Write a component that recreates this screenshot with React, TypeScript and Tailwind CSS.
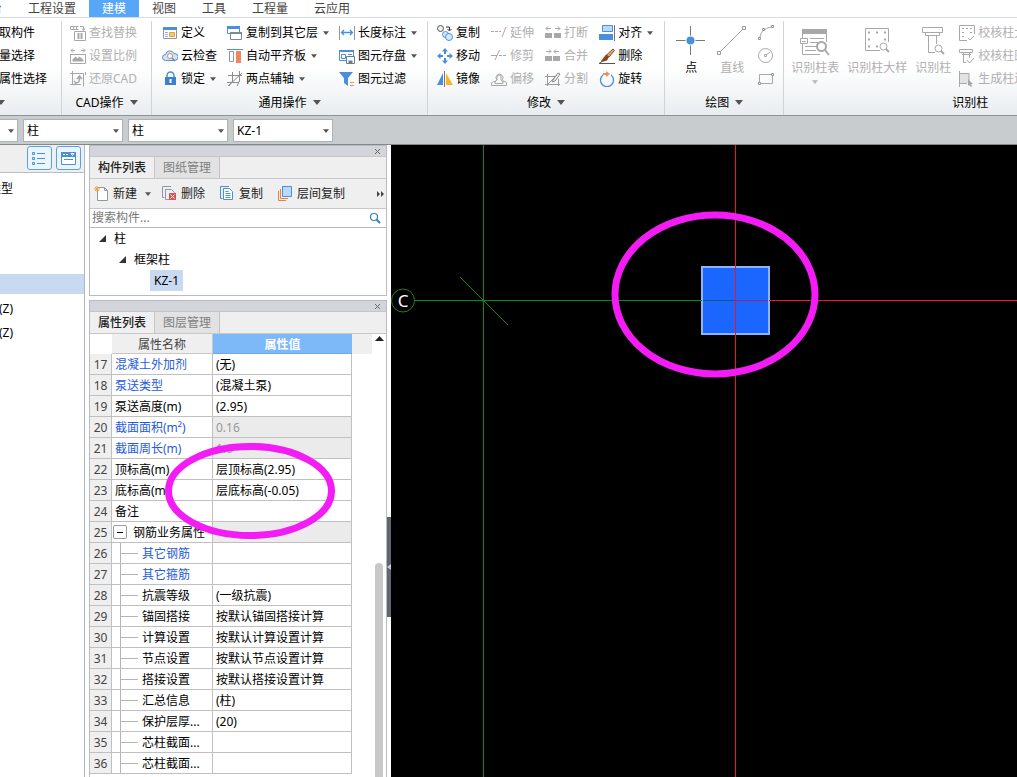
import type { ReactNode } from "react";

const G = "#a8a8a8";
const B = "#4a8fdc";

function Caret({ off = false, big = false }: { off?: boolean; big?: boolean }) {
  return (
    <svg width={big ? 8 : 6} height={big ? 5 : 4} viewBox="0 0 8 5" className="shrink-0">
      <path d="M0 0h8L4 5z" fill={off ? "#b5b5b5" : "#555"} />
    </svg>
  );
}

function Icon({ size = 16, children }: { size?: number; children: ReactNode }) {
  return (
    <svg width={size} height={size} viewBox={`0 0 ${size} ${size}`} fill="none" className="shrink-0">
      {children}
    </svg>
  );
}

const icons = {
  find: (
    <Icon>
      <path d="M.5 1.5h8M.5 4.5h8M.5 1v3M3.5 1v3M6.5 1v3M10 1.5h3.5V5M12 3.5l1.5 2 1.5-2" stroke={G} />
      <path d="M4.5 6.5h11v9h-11zM7 9h6M7 11h6M7 13h6M8.5 8v6M11.5 8v6" stroke={G} />
    </Icon>
  ),
  scale: (
    <Icon>
      <path d="M1 2.5h4M3 .5l-2 2 2 2M11 2.5h4M13 .5l2 2-2 2M.5 6v9.500h15V6M.5 6.5h15" stroke={G} />
      <path d="M2.5 13.5v-2l3-3 2 2 2-2 4 3.500v1.500z" fill={G} />
    </Icon>
  ),
  restore: (
    <Icon>
      <path d="M2.5 0v13.500M0 2.5h13.500v13M0 13.5h11M15.5 1v3" stroke={G} />
      <path d="M5.5 12c4 0 4-2 4-6M7 8l2.500-3L12 8M4 10l2 2-2 2" stroke={G} strokeWidth="1.5" />
    </Icon>
  ),
  define: (
    <Icon>
      <path d="M1.5 2.5h13v11h-13z" fill="#fff" stroke="#8a98a8" />
      <path d="M1 2h14v3H1z" fill={B} />
      <path d="M3 7.5h3M3 9.5h3M3 11.5h3" stroke="#8fb4dd" />
      <path d="M7.5 7.5h5v4h-5z" fill="#f8c878" stroke="#e8a23c" />
    </Icon>
  ),
  cloud: (
    <Icon>
      <path d="M3.5 12.5a3 3 0 0 1 0-6 4.500 4.500 0 0 1 8.500-1 3.500 3.500 0 0 1 1 7z" fill="#cfe2f7" stroke="#5b92cf" />
      <circle cx="8" cy="8" r="2.5" fill="#fff" stroke="#d8826a" />
      <path d="M10 10l3 3" stroke="#5b92cf" strokeWidth="1.5" />
    </Icon>
  ),
  lock: (
    <Icon>
      <path d="M5 7V4.500a3.500 3.500 0 0 1 7 0V7" stroke={B} strokeWidth="1.5" />
      <path d="M3 6h11v8H3z" fill="#3b7fd0" />
      <path d="M8.5 8v4" stroke="#fff" strokeWidth="2" />
    </Icon>
  ),
  floors: (
    <Icon>
      <path d="M.5 1.5h12v7H.5z" fill="#fff" stroke={B} />
      <path d="M0 1h13v3H0z" fill={B} />
      <path d="M3.5 7.5h11v7h-11z" fill="#fff" stroke="#7c8a96" />
      <path d="M3 7h12v2H3z" fill="#7c8a96" />
    </Icon>
  ),
  slab: (
    <Icon>
      <path d="M0 1.5h16" stroke={B} />
      <path d="M2.5 3.5h4v10h-4z" stroke="#8a98a8" />
      <path d="M9 3h5v12H9z" fill="#f0855e" />
    </Icon>
  ),
  axis: (
    <Icon>
      <path d="M1 4.5h14M0 11.5h12M5.5 1v9L2 15M12.5 0v10L10 15M1 15L15 2" stroke="#8c8c8c" />
    </Icon>
  ),
  dim: (
    <Icon>
      <path d="M.5 1v14M15.5 1v14" stroke="#8a98a8" />
      <path d="M2.5 7.5h11M5 5L2.5 7.5 5 10M11 5l2.500 2.500L11 10" stroke={B} strokeWidth="1.3" />
    </Icon>
  ),
  store: (
    <Icon>
      <path d="M.5 2.5h14v10H.5z" fill="#fff" stroke={B} />
      <path d="M0 2h15v2H0z" fill={B} />
      <path d="M2.5 6.5h4v4h-4zM9 6.5h4" stroke={B} />
      <path d="M7.5 8.5h8v7h-8z" fill="#fff" stroke="#6d7c8a" />
      <path d="M9.5 12.5h4v3h-4z" fill="#6d7c8a" />
    </Icon>
  ),
  filter: (
    <Icon>
      <path d="M0 1h14L9 7v8l-4-3V7z" fill={B} />
      <path d="M11 11.5h4M11 14.5h4" stroke="#e8935c" />
    </Icon>
  ),
  copy: (
    <Icon>
      <circle cx="3.5" cy="3.5" r="3" fill="#eee" stroke="#555" />
      <path d="M9 2h3.500v3M10.5 4l2 2 2-2" stroke="#333" />
      <circle cx="8.5" cy="9.5" r="3" fill="#d6e8fb" stroke={B} />
      <circle cx="12" cy="12" r="3.5" fill="#d6e8fb" stroke={B} />
    </Icon>
  ),
  move: (
    <Icon>
      <path
        d="M8 0l3 3.500H9V6H7V3.500H5zM8 16l-3-3.500h2V10h2v2.500h2zM0 8l3.500-3v2H6v2H3.500v2zM16 8l-3.500 3V9H10V7h2.500V5z"
        fill={B}
      />
    </Icon>
  ),
  mirror: (
    <Icon>
      <path d="M6 2v12H0z" fill={B} />
      <path d="M9 2v12h7z" fill="#f5b52e" />
      <path d="M7.5 0v16" stroke="#777" />
    </Icon>
  ),
  extend: (
    <Icon>
      <path d="M0 6.5h10" stroke={G} strokeDasharray="3 1" />
      <path d="M15 2l-4 10" stroke={G} />
    </Icon>
  ),
  trim: (
    <Icon>
      <path d="M0 7.5h6" stroke={G} />
      <path d="M8 7.5h8" stroke={G} strokeDasharray="3 1" />
      <path d="M8.5 2L4 12" stroke={G} />
    </Icon>
  ),
  offset: (
    <Icon>
      <path d="M.5 14.5V12l2-1.500h2l1-2a3.500 3.500 0 1 1 6 0l1 2h2l1 1.500v2.500z" stroke={G} />
      <path d="M4 12.5h8V11l-2-2V6a2 2 0 0 0-4 0v3l-2 2z" stroke={G} />
    </Icon>
  ),
  breakIt: (
    <Icon>
      <path d="M0 8h7v5H0zM9 8h7v5H9z" fill={G} />
      <path d="M1 3.5h5M3 1.5l-2 2 2 2M10 3.5h5M13 1.5l2 2-2 2" stroke={G} />
    </Icon>
  ),
  join: (
    <Icon>
      <path d="M0 8h7v5H0zM8 8h7v5H8z" fill={G} />
      <path d="M1 3.5h5M4 1.5l2 2-2 2M9 3.5h5M11 1.5l-2 2 2 2" stroke={G} />
    </Icon>
  ),
  split: (
    <Icon>
      <path d="M2.5 3v12M0 5.5h11M0 13.5h15M13.5 8v7M3 13l9-9" stroke="#999" />
      <path d="M8 9l5-7 2 1-5 7-3 1z" stroke="#888" />
    </Icon>
  ),
  align: (
    <Icon>
      <path d="M3.5.5h10v6h-10z" fill="#b9d8fa" stroke={B} />
      <path d="M0 9h14v6H0z" fill={B} />
      <path d="M15.5 0v16" stroke="#777" />
    </Icon>
  ),
  erase: (
    <Icon>
      <path d="M14 1l1.500 1.500L10 9 7.500 7z" fill="#e0a070" stroke="#8a5030" />
      <path d="M7 6.5L10 9l-2 3.500L3 14l-1-1z" fill="#8a4520" />
      <path d="M0 15.5h16M0 15.5l3-2" stroke="#555" />
    </Icon>
  ),
  rotate: (
    <Icon>
      <path d="M4 4a6.500 6.500 0 1 0 8 0" stroke={B} strokeWidth="1.3" />
      <path d="M4 3h4" stroke="#e8935c" strokeWidth="2" />
      <path d="M7 0l4 3-4 3z" fill="#e8935c" />
    </Icon>
  ),
  arc: (
    <Icon>
      <path d="M2 12q1-8 11-10" stroke={G} />
      <path d="M.5 12.5h2v2h-2zM4.5 3.5h2v2h-2zM13.5.5h2v2h-2z" fill="#fff" stroke="#999" />
    </Icon>
  ),
  circle: (
    <Icon>
      <circle cx="7.5" cy="7.5" r="7" stroke={G} />
      <path d="M8 7l4-3M6.5 6.5h2v2h-2z" stroke={G} />
    </Icon>
  ),
  rect: (
    <Icon>
      <path d="M1.5 3.5h13v9h-13z" stroke={G} />
      <path d="M.5 11.5h2v2h-2zM13.5 2.5h2v2h-2z" fill="#fff" stroke="#999" />
    </Icon>
  ),
  checkDetail: (
    <Icon>
      <path d="M8 15.5H.5V.5h15V9" stroke={G} />
      <path d="M3 3.5h2M7 3.5h2M11 3.5h2M3 7.5h2M11 7.5h2M3 11.5h2" stroke={G} />
      <path d="M9 13l2 2 4-4" stroke={G} />
    </Icon>
  ),
  checkCol: (
    <Icon>
      <path d="M.5 1.5h13v3H.5zM4.5 4.5v10h3M10.5 5v5M3 6.5h9" stroke={G} />
      <path d="M8 12l2.500 3 4.500-5" stroke={G} />
    </Icon>
  ),
  makeEdge: (
    <Icon>
      <path d="M1 2h9v10H1z" fill="#e3e3e3" />
      <path d="M.5 0v16M0 2.5h10V10M0 12.5h8" stroke={G} />
      <path d="M9 8l5 5h-2l1 2-1 1-2-2-1 1z" fill={G} />
    </Icon>
  ),
};

type ToolProps = { icon?: ReactNode; label?: string; caret?: boolean; off?: boolean };

function Tool({ icon, label, caret, off }: ToolProps) {
  return (
    <button
      type="button"
      disabled={off}
      className={`flex h-[23px] items-center gap-[3px] whitespace-nowrap ${off ? "text-[#b0b0b0]" : "text-black"}`}
    >
      {icon}
      {label && <span>{label}</span>}
      {caret && (
        <span className="ml-0.5 flex">
          <Caret />
        </span>
      )}
    </button>
  );
}

function BigTool({ icon, label, caret, off }: ToolProps) {
  return (
    <button
      type="button"
      disabled={off}
      className={`flex flex-col items-center self-start pt-[5px] whitespace-nowrap ${off ? "text-[#b0b0b0]" : "text-black"}`}
    >
      {icon}
      <span className="leading-6">{label}</span>
      {caret && <Caret off />}
    </button>
  );
}

type GroupProps = { title: string; pad: string; gap?: string; last?: boolean; children: ReactNode };

function RibbonGroup({ title, pad, gap = "", last = false, children }: GroupProps) {
  return (
    <section className={`flex shrink-0 flex-col ${last ? "w-[372px]" : "border-r border-[#d0d4d8]"}`}>
      <div className={`flex h-[69px] ${pad} ${gap}`}>{children}</div>
      <h2 className="flex h-[25px] items-center justify-center gap-[6px] whitespace-nowrap text-black">
        {title}
        {!last && <Caret big />}
      </h2>
    </section>
  );
}

const menus = ["工程设置", "建模", "视图", "工具", "工程量", "云应用"];

function MenuBar() {
  return (
    <nav className="flex h-[18px] shrink-0 border-b border-[#d5dce2] bg-white leading-[17px] text-[#444]">
      <button type="button" className="flex w-[15px] justify-end overflow-hidden pr-[13px]">
        台
      </button>
      {menus.map((m) => (
        <button
          type="button"
          key={m}
          className={`px-[13px] ${m === "建模" ? "bg-[#57a6f7] text-white" : ""}`}
        >
          {m}
        </button>
      ))}
    </nav>
  );
}

function Ribbon() {
  return (
    <div className="flex shrink-0 overflow-hidden border-b border-[#8f9396] bg-gradient-to-b from-white from-50% to-[#e9edef] pt-[3px]">
      {/* scrolled left, only the tail of the first group shows */}
      <div className="-ml-[89px] flex shrink-0">
        <RibbonGroup title="选择" pad="pl-[76px] pr-[14px]">
          <div>
            <Tool label="拾取构件" />
            <Tool label="批量选择" />
            <Tool label="按属性选择" />
          </div>
        </RibbonGroup>
      </div>
      <RibbonGroup title="CAD操作" pad="pl-2 pr-[14px]">
        <div>
          <Tool icon={icons.find} label="查找替换" off />
          <Tool icon={icons.scale} label="设置比例" off />
          <Tool icon={icons.restore} label="还原CAD" off />
        </div>
      </RibbonGroup>
      <RibbonGroup title="通用操作" pad="pl-[10px] pr-[10px]" gap="gap-[10px]">
        <div>
          <Tool icon={icons.define} label="定义" />
          <Tool icon={icons.cloud} label="云检查" />
          <Tool icon={icons.lock} label="锁定" caret />
        </div>
        <div>
          <Tool icon={icons.floors} label="复制到其它层" caret />
          <Tool icon={icons.slab} label="自动平齐板" caret />
          <Tool icon={icons.axis} label="两点辅轴" caret />
        </div>
        <div>
          <Tool icon={icons.dim} label="长度标注" caret />
          <Tool icon={icons.store} label="图元存盘" caret />
          <Tool icon={icons.filter} label="图元过滤" />
        </div>
      </RibbonGroup>
      <RibbonGroup title="修改" pad="pl-[9px] pr-[11px]" gap="gap-[11px]">
        <div>
          <Tool icon={icons.copy} label="复制" />
          <Tool icon={icons.move} label="移动" />
          <Tool icon={icons.mirror} label="镜像" />
        </div>
        <div>
          <Tool icon={icons.extend} label="延伸" off />
          <Tool icon={icons.trim} label="修剪" off />
          <Tool icon={icons.offset} label="偏移" off />
        </div>
        <div>
          <Tool icon={icons.breakIt} label="打断" off />
          <Tool icon={icons.join} label="合并" off />
          <Tool icon={icons.split} label="分割" off />
        </div>
        <div>
          <Tool icon={icons.align} label="对齐" caret />
          <Tool icon={icons.erase} label="删除" />
          <Tool icon={icons.rotate} label="旋转" />
        </div>
      </RibbonGroup>
      <RibbonGroup title="绘图" pad="pl-[11px] pr-[9px]" gap="gap-[11px]">
        <BigTool
          label="点"
          icon={
            <Icon size={30}>
              <path d="M14.5 0v29M0 14.5h29" stroke="#777" />
              <circle cx="14.5" cy="14.5" r="5" fill="#fff" />
              <circle cx="14.5" cy="14.5" r="4" fill={B} />
            </Icon>
          }
        />
        <BigTool
          off
          label="直线"
          icon={
            <Icon size={30}>
              <path d="M3 26L27 2" stroke={G} />
              <path d="M.5 25.5h3v3h-3zM25.5.5h3v3h-3z" fill="#fff" stroke="#999" />
            </Icon>
          }
        />
        <div>
          <Tool icon={icons.arc} off />
          <Tool icon={icons.circle} off />
          <Tool icon={icons.rect} off />
        </div>
      </RibbonGroup>
      <RibbonGroup title="识别柱" pad="pl-[7px]" gap="gap-2" last>
        <BigTool
          off
          caret
          label="识别柱表"
          icon={
            <Icon size={30}>
              <path d="M2 3h25v5H2z" fill={G} />
              <path
                d="M2.5 8v4M2.500 18v10.500H20M26.5 8v8M.5 12.5h7v5h-7zM2 15.500h4M10 12.500h14M10 16.500h8M5 20.5h11M5 24.5h11"
                stroke={G}
              />
              <circle cx="21.5" cy="20.5" r="4.5" fill="#fff" stroke={G} strokeWidth="2" />
              <path d="M25 24l4 5" stroke={G} strokeWidth="2" />
            </Icon>
          }
        />
        <BigTool
          off
          label="识别柱大样"
          icon={
            <Icon size={30}>
              <path d="M26.5 16V2.500h-23v22H18" stroke={G} />
              <path d="M6 6.5h2M14 6.5h2M22 6.5h2M6 13.5h2M22 13.5h2M6 20.5h2M14 20.5h2" stroke={G} strokeWidth="2" />
              <circle cx="21.5" cy="20.5" r="3.5" stroke={G} />
              <path d="M24 23l3 3" stroke={G} strokeWidth="2" />
            </Icon>
          }
        />
        <BigTool
          off
          label="识别柱"
          icon={
            <Icon size={30}>
              <path d="M4.5 1.5h20v5h-20zM7.5 6.5v3h14v-3M10.5 9.5v17H17M18.5 9.5V18" stroke={G} />
              <circle cx="20.5" cy="22.5" r="3.5" stroke={G} />
              <path d="M23 25l3 3" stroke={G} strokeWidth="2" />
            </Icon>
          }
        />
        <div>
          <Tool icon={icons.checkDetail} label="校核柱大样" off />
          <Tool icon={icons.checkCol} label="校核柱图元" off />
          <Tool icon={icons.makeEdge} label="生成柱边线" off />
        </div>
      </RibbonGroup>
    </div>
  );
}

function Combo({ name, value }: { name: string; value: string }) {
  return (
    <div className="relative w-[100px] shrink-0">
      <select
        aria-label={name}
        defaultValue={value}
        className="h-[23px] w-full appearance-none border border-[#aeb2b6] bg-white pl-[3px] text-[12px] text-black"
      >
        <option>{value}</option>
      </select>
      <span className="pointer-events-none absolute inset-y-0 right-1 flex items-center">
        <Caret />
      </span>
    </div>
  );
}

function FilterBar() {
  return (
    <div className="flex h-[29px] shrink-0 items-start gap-[5px] overflow-hidden border-b border-[#85888b] bg-[#c9cccf] pt-[3px]">
      <div className="-ml-[82px] shrink-0">
        <Combo name="楼层" value="首层" />
      </div>
      <Combo name="构件大类" value="柱" />
      <Combo name="构件类型" value="柱" />
      <Combo name="构件" value="KZ-1" />
    </div>
  );
}

const navRows = ["常用类型", "", "", "", "", "构造柱(Z)", "砌体柱(Z)"];

function NavPanel() {
  const btn = "flex h-6 w-[25px] items-center justify-center rounded-[3px] border border-[#5aa0e6] bg-[#eaf5ff]";
  return (
    <aside className="w-[85px] shrink-0 border-r border-[#b4b8be] bg-white">
      <div className="flex h-7 justify-end gap-1 border-b border-[#b9bdc2] bg-[#efefef] pt-px pr-[3px]">
        <button type="button" aria-label="列表" className={btn}>
          <Icon size={15}>
            <path d="M.5 1.5h2v2h-2zM.5 6.5h2v2h-2zM.5 11.5h2v2h-2z" stroke={B} />
            <path d="M5 2.5h8M5 7.5h8M5 12.5h8" stroke={B} />
          </Icon>
        </button>
        <button type="button" aria-label="窗口" className={btn}>
          <Icon size={15}>
            <path d="M.5 1.5h14v12H.5z" fill="#fff" stroke={B} />
            <path d="M0 1h15v5H0z" fill={B} />
            <path d="M2 3.5h2M5 3.5h2M10 2.5h3l-1.500 2z" stroke="#fff" />
            <path d="M3 8.5h9" stroke={B} />
          </Icon>
        </button>
      </div>
      <ul className="pt-[3px]">
        {navRows.map((r, i) => (
          <li key={i} className="flex h-6 items-center">
            <div className={`h-5 w-full ${i === 4 ? "bg-[#c9d9ef]" : ""}`}>
              <span className="flex w-[13px] justify-end leading-[22px] whitespace-nowrap text-black">{r}</span>
            </div>
          </li>
        ))}
      </ul>
    </aside>
  );
}

function PanelHead({ tabs }: { tabs: string[] }) {
  return (
    <>
      <div className="flex h-[11px] items-center justify-end border-b border-[#c3c5cb] bg-[#d4d5db] pr-[5px]">
        <button type="button" aria-label="关闭">
          <svg width="7" height="7" viewBox="0 0 7 7" className="block">
            <path d="M1 1l5 5M6 1L1 6" stroke="#666" />
          </svg>
        </button>
      </div>
      <div className="flex h-[22px] border-b border-[#c6c8cc] bg-[#efefef]">
        <button type="button" className="border-r border-[#c6c8cc] px-2 font-medium text-[#222]">
          {tabs[0]}
        </button>
        <button type="button" className="border-r border-[#c0c2c6] bg-[#e2e2e2] px-2 text-[#808080]">
          {tabs[1]}
        </button>
      </div>
    </>
  );
}

function TreeMark() {
  return (
    <svg width="7" height="7" viewBox="0 0 7 7">
      <path d="M7 0v7H0z" fill="#333" />
    </svg>
  );
}

function ComponentPanel() {
  const tool = "flex items-center gap-[3px] whitespace-nowrap text-[#222]";
  return (
    <section className="border border-[#b8bbc2] bg-white">
      <PanelHead tabs={["构件列表", "图纸管理"]} />
      <div className="flex h-[30px] items-center gap-[15px] border-b border-[#c6c8cc] bg-[#efefef] pr-px pl-1">
        <div className="flex items-center gap-2">
          <button type="button" className={tool}>
            <Icon>
              <path d="M3.5 1.5h7l3 3v10h-10z" fill="#fff" stroke="#8a98a8" />
              <path d="M10.5 1.5v3h3" stroke="#8a98a8" />
              <path d="M3 0v6M0 3h6M1 1l4 4M5 1L1 5" stroke="#f0a040" />
            </Icon>
            新建
          </button>
          <Caret />
        </div>
        <button type="button" className={`-ml-1 ${tool}`}>
          <Icon>
            <path d="M9 .5H.5v11h2M3.5 3.5h6l3 3v3M3.5 3.5v10H7" stroke="#8a98a8" />
            <path d="M7 7h7v7H7z" fill="#d9525a" />
            <path d="M8.5 8.5l4 4M12.5 8.5l-4 4" stroke="#fff" />
          </Icon>
          删除
        </button>
        <button type="button" className={tool}>
          <Icon>
            <path d="M9 .5H.5v12h2" stroke={B} />
            <path d="M3.5 2.5h6l3 3v8h-9z" fill="#fff" stroke={B} />
            <path d="M5.5 5.5h3M5.5 7.5h5M5.5 9.5h5M5.5 11.5h5" stroke={B} />
          </Icon>
          复制
        </button>
        <button type="button" className={tool}>
          <Icon>
            <path d="M4.5.5h9v10h-9z" fill="#b9d8fa" stroke={B} />
            <path d="M2.5 3v9.500H10M.5 5v9.500H8" stroke="#e8833c" />
          </Icon>
          层间复制
        </button>
        <button type="button" aria-label="更多" className="ml-auto">
          <svg width="8" height="6" viewBox="0 0 8 6">
            <path d="M0 0v6l3-3zM4 0v6l3-3z" fill="#444" />
          </svg>
        </button>
      </div>
      <div className="flex h-[19px] items-center border-b border-[#b8bbc2] pr-[5px] pl-0.5">
        <input
          type="text"
          aria-label="搜索构件"
          placeholder="搜索构件..."
          className="min-w-0 flex-1 leading-4 outline-none placeholder:text-[#777]"
        />
        <svg width="12" height="12" viewBox="0 0 12 12" fill="none">
          <circle cx="5" cy="5" r="3.5" stroke="#2f83b5" strokeWidth="1.2" />
          <path d="M7.5 7.5l3.500 3.500" stroke="#2f83b5" strokeWidth="2" />
        </svg>
      </div>
      <ul className="h-[67px] leading-[21px] text-black">
        <li className="flex items-center gap-2 pl-[9px]">
          <TreeMark />柱
        </li>
        <li className="flex items-center gap-2 pl-[29px]">
          <TreeMark />
          框架柱
        </li>
        <li className="pl-[60px]">
          <span className="inline-block bg-[#c9d9ef] px-1">KZ-1</span>
        </li>
      </ul>
    </section>
  );
}

type Row = { n: number; name: string; value?: string; blue?: boolean; grey?: boolean; child?: boolean; parent?: boolean };

const rows: Row[] = [
  { n: 17, name: "混凝土外加剂", value: "(无)", blue: true },
  { n: 18, name: "泵送类型", value: "(混凝土泵)", blue: true },
  { n: 19, name: "泵送高度(m)", value: "(2.95)" },
  { n: 20, name: "截面面积(m²)", value: "0.16", blue: true, grey: true },
  { n: 21, name: "截面周长(m)", value: "1.6", blue: true, grey: true },
  { n: 22, name: "顶标高(m)", value: "层顶标高(2.95)" },
  { n: 23, name: "底标高(m)", value: "层底标高(-0.05)" },
  { n: 24, name: "备注" },
  { n: 25, name: "钢筋业务属性", grey: true, parent: true },
  { n: 26, name: "其它钢筋", blue: true, child: true },
  { n: 27, name: "其它箍筋", blue: true, child: true },
  { n: 28, name: "抗震等级", value: "(一级抗震)", child: true },
  { n: 29, name: "锚固搭接", value: "按默认锚固搭接计算", child: true },
  { n: 30, name: "计算设置", value: "按默认计算设置计算", child: true },
  { n: 31, name: "节点设置", value: "按默认节点设置计算", child: true },
  { n: 32, name: "搭接设置", value: "按默认搭接设置计算", child: true },
  { n: 33, name: "汇总信息", value: "(柱)", child: true },
  { n: 34, name: "保护层厚...", value: "(20)", child: true },
  { n: 35, name: "芯柱截面...", child: true },
  { n: 36, name: "芯柱截面...", child: true },
];

function NameCell({ row }: { row: Row }) {
  return (
    <div className={`flex h-5 items-center whitespace-nowrap ${row.child ? "pl-2" : row.parent ? "pl-px" : "pl-[3px]"}`}>
      {row.child && (
        <span className="mr-1 flex h-5 w-[18px] shrink-0 items-center border-l border-[#b4b4b4]">
          <span className="h-px w-full bg-[#b4b4b4]" />
        </span>
      )}
      {row.parent && (
        <button
          type="button"
          aria-label="折叠"
          className="mr-[6px] flex size-[14px] shrink-0 items-center justify-center rounded-[2px] border border-[#999] bg-white"
        >
          <span className="h-px w-[6px] bg-black" />
        </button>
      )}
      <span className="pt-0.5">{row.name}</span>
    </div>
  );
}

function PropertyPanel() {
  const cell = "border-r border-b border-[#c0c0c0] p-0";
  return (
    <section className="relative mt-1 flex min-h-0 flex-1 flex-col border border-b-0 border-[#b8bbc2] bg-white">
      <PanelHead tabs={["属性列表", "图层管理"]} />
      <div className="flex min-h-0 flex-1 overflow-hidden">
        <table className="w-[282px] shrink-0 table-fixed border-separate border-spacing-0 self-start text-left text-black">
          <colgroup>
            <col className="w-[22px]" />
            <col className="w-[101px]" />
            <col className="w-[139px]" />
            <col className="w-5" />
          </colgroup>
          <thead>
            <tr className="h-5 text-center">
              <td className="p-0" />
              <th className="border-r border-b border-[#c8c8c8] bg-[#efefef] p-0 pt-0.5 font-normal text-[#444]">属性名称</th>
              <th className="border-b border-[#6fa8e8] bg-[#7db8f8] p-0 pt-0.5 font-bold text-white">属性值</th>
              <td className="bg-[#efefef] p-0" />
            </tr>
          </thead>
          <tbody>
            {rows.map((r) => (
              <tr key={r.n} className="h-[21px]">
                <td className={`${cell} bg-[#efefef] pt-0.5 text-center text-[#444]`}>{r.n}</td>
                <td className={`${cell} ${r.blue ? "text-[#1f5ae0]" : ""}`}>
                  <NameCell row={r} />
                </td>
                <td className={`${cell} pt-0.5 pl-[3px] whitespace-nowrap ${r.grey ? "bg-[#ebebeb] text-[#999]" : ""}`}>
                  {r.value}
                </td>
              </tr>
            ))}
          </tbody>
        </table>
        <div className="flex flex-1 flex-col items-center justify-between pt-[2px]">
          <svg width="9" height="5" viewBox="0 0 9 5">
            <path d="M0 5h9L4.5 0z" fill="#222" />
          </svg>
          <div className="h-[214px] w-2 rounded-t-full bg-[#c8c8c8]" />
        </div>
      </div>
      <svg className="pointer-events-none absolute top-[141px] left-[74px]" width="172" height="98" viewBox="0 0 172 98">
        <ellipse cx="86" cy="49" rx="81.5" ry="44.5" fill="none" stroke="#f41cf4" strokeWidth="7" />
      </svg>
    </section>
  );
}

function ModelView() {
  return (
    <main className="min-w-0 flex-1 overflow-hidden bg-black">
      <svg width="100%" height="100%" className="block">
        {/* column section */}
        <rect x="311" y="122" width="67" height="67" fill="#1a66ff" stroke="#8fb4ff" strokeWidth="2" />
        {/* axes */}
        <rect x="92" y="0" width="1" height="100%" fill="#0a8a1a" />
        <rect x="23" y="155" width="288" height="1" fill="#0a8a1a" />
        <rect x="312" y="155" width="32" height="1" fill="#0b5a78" />
        <rect x="344" y="0" width="1" height="100%" fill="#f0142a" />
        <rect x="344" y="155" width="33" height="1" fill="#a02868" />
        <rect x="378" y="155" width="100%" height="1" fill="#f0142a" />
        <path d="M69 132l48 48" stroke="#1f8a24" />
        <circle cx="12" cy="155.5" r="11.5" fill="none" stroke="#1f7f26" />
        <text x="12" y="162" textAnchor="middle" fontSize="17" fill="#fff" className="font-['Noto_Sans']">
          C
        </text>
        <ellipse cx="324" cy="149.5" rx="100" ry="79.5" fill="none" stroke="#f41cf4" strokeWidth="7" />
      </svg>
    </main>
  );
}

export default function App() {
  return (
    <div className="flex h-screen flex-col overflow-hidden bg-white font-['Noto_Sans','Noto_Sans_CJK_SC',sans-serif] text-[12px] leading-4 text-[#111]">
      <MenuBar />
      <Ribbon />
      <FilterBar />
      <div className="flex min-h-0 flex-1">
        <NavPanel />
        <div className="ml-1 flex w-[298px] shrink-0 flex-col">
          <ComponentPanel />
          <PropertyPanel />
        </div>
        <div className="flex w-1 shrink-0 flex-col justify-center bg-white">
          <button type="button" aria-label="收起" className="mb-[-212px] flex h-[100px] items-center bg-[#5f6670]">
            <svg width="4" height="6" viewBox="0 0 4 6">
              <path d="M4 0v6L0 3z" fill="#ccc" />
            </svg>
          </button>
        </div>
        <ModelView />
      </div>
    </div>
  );
}
